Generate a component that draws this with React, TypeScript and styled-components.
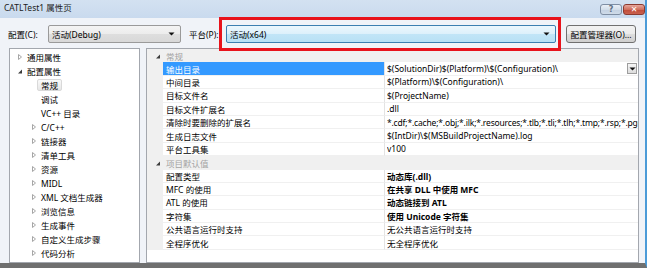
import React from 'react'
import styled, { createGlobalStyle } from 'styled-components'

const FONT = `"Noto Sans", "Noto Sans CJK SC", sans-serif`

const GlobalStyle = createGlobalStyle`
  html, body {
    margin: 0;
    padding: 0;
    background: #ffffff;
  }
  body {
    font-family: ${FONT};
    font-size: 8.5px;
    color: #000;
  }
`

interface TreeNode {
  label: string
  depth: number
  arrow?: 'open' | 'closed'
  selected?: boolean
}

interface PropRow {
  name: string
  value: string
  bold?: boolean
  selected?: boolean
  tight?: boolean
}

interface Section {
  title: string
  rows: PropRow[]
}

const treeNodes: TreeNode[] = [
  { label: '通用属性', depth: 0, arrow: 'closed' },
  { label: '配置属性', depth: 0, arrow: 'open' },
  { label: '常规', depth: 1, selected: true },
  { label: '调试', depth: 1 },
  { label: 'VC++ 目录', depth: 1 },
  { label: 'C/C++', depth: 1, arrow: 'closed' },
  { label: '链接器', depth: 1, arrow: 'closed' },
  { label: '清单工具', depth: 1, arrow: 'closed' },
  { label: '资源', depth: 1, arrow: 'closed' },
  { label: 'MIDL', depth: 1, arrow: 'closed' },
  { label: 'XML 文档生成器', depth: 1, arrow: 'closed' },
  { label: '浏览信息', depth: 1, arrow: 'closed' },
  { label: '生成事件', depth: 1, arrow: 'closed' },
  { label: '自定义生成步骤', depth: 1, arrow: 'closed' },
  { label: '代码分析', depth: 1, arrow: 'closed' }
]

const sections: Section[] = [
  {
    title: '常规',
    rows: [
      {
        name: '输出目录',
        value: '$(SolutionDir)$(Platform)\\$(Configuration)\\',
        selected: true
      },
      { name: '中间目录', value: '$(Platform)\\$(Configuration)\\' },
      { name: '目标文件名', value: '$(ProjectName)' },
      { name: '目标文件扩展名', value: '.dll' },
      {
        name: '清除时要删除的扩展名',
        value:
          '*.cdf;*.cache;*.obj;*.ilk;*.resources;*.tlb;*.tli;*.tlh;*.tmp;*.rsp;*.pgc',
        tight: true
      },
      { name: '生成日志文件', value: '$(IntDir)\\$(MSBuildProjectName).log' },
      { name: '平台工具集', value: 'v100' }
    ]
  },
  {
    title: '项目默认值',
    rows: [
      { name: '配置类型', value: '动态库(.dll)', bold: true },
      { name: 'MFC 的使用', value: '在共享 DLL 中使用 MFC', bold: true },
      { name: 'ATL 的使用', value: '动态链接到 ATL', bold: true },
      { name: '字符集', value: '使用 Unicode 字符集', bold: true },
      { name: '公共语言运行时支持', value: '无公共语言运行时支持' },
      { name: '全程序优化', value: '无全程序优化' }
    ]
  }
]

const Window = styled.div`
  position: relative;
  width: 647px;
  height: 268px;
  box-sizing: border-box;
  display: flex;
  flex-direction: column;
  background: #f0f3f8;
  border-right: 2px solid #4b9bd8;
  border-bottom: 5px solid #6f6f6f;
`

const TitleBar = styled.div`
  height: 18px;
  display: flex;
  align-items: flex-start;
  padding-left: 4px;
  background: linear-gradient(#d3e1f1, #c9daee);
`
const TitleText = styled.span`
  line-height: 16px;
  font-size: 8.5px;
  color: #1b1b1b;
`
const TitleButtons = styled.div`
  margin-left: auto;
  margin-top: 4px;
  display: flex;
  gap: 1px;
`
const CaptionButton = styled.div<{ $close?: boolean }>`
  width: 22px;
  height: 11px;
  box-sizing: border-box;
  border-radius: 3px;
  display: flex;
  align-items: center;
  justify-content: center;
  font-family: "DejaVu Sans", sans-serif;
  font-weight: bold;
  font-size: 8px;
  line-height: 1;
  border: 1px solid ${p => (p.$close ? '#8b3a30' : '#7f8ea3')};
  color: ${p => (p.$close ? '#ffffff' : '#5d6d82')};
  background: ${p =>
    p.$close
      ? 'linear-gradient(#e6a79d, #d0705f 50%, #c04a37 51%, #c9614f)'
      : 'linear-gradient(#e9eff7, #d3deea 50%, #c3d1e2 51%, #cfdbe9)'};
`

const ConfigRow = styled.div`
  display: flex;
  align-items: center;
  height: 18px;
  margin-top: 7px;
  padding-left: 8px;
`
const FieldLabel = styled.span<{ $width: number; $gap?: number }>`
  width: ${p => p.$width}px;
  margin-left: ${p => p.$gap ?? 0}px;
  flex-shrink: 0;
  white-space: nowrap;
`
const Combo = styled.div<{ $width: number; $hot?: boolean }>`
  width: ${p => p.$width}px;
  height: 18px;
  box-sizing: border-box;
  display: flex;
  align-items: center;
  padding: 0 5px 0 3px;
  border-radius: 2px;
  border: 1px solid ${p => (p.$hot ? '#3c7fb1' : '#9a9a9a')};
  background: ${p =>
    p.$hot
      ? 'linear-gradient(#ecf7fd, #dcf0fb 50%, #c1e5f7 51%, #b8e0f5)'
      : 'linear-gradient(#f4f4f4, #ececec 50%, #dedede 51%, #d8d8d8)'};
`
const ComboText = styled.span`
  flex: 1;
  white-space: nowrap;
`
const ManagerButton = styled.div`
  margin-left: 10px;
  width: 70px;
  height: 18px;
  box-sizing: border-box;
  display: flex;
  align-items: center;
  justify-content: center;
  border-radius: 3px;
  border: 1px solid #707070;
  background: linear-gradient(#f2f2f2, #ebebeb 50%, #dddddd 51%, #cfcfcf);
  white-space: nowrap;
`

const Highlight = styled.div`
  position: absolute;
  left: 219px;
  top: 17px;
  width: 342px;
  height: 34px;
  box-sizing: border-box;
  border: 3px solid #e8131c;
  pointer-events: none;
`

const Body = styled.div`
  flex: 1;
  display: flex;
  gap: 6px;
  margin-top: 5px;
  padding: 0 6px 0 9px;
`

const Panel = styled.div`
  box-sizing: border-box;
  border: 1px solid #a3a7ae;
  background: #ffffff;
  overflow: hidden;
`
const TreePanel = styled(Panel)`
  width: 131px;
  padding-top: 1px;
`
const TreeItem = styled.div<{ $depth: number }>`
  height: 14px;
  display: flex;
  align-items: center;
  padding-left: ${p => 5 + p.$depth * 14}px;
`
const ArrowBox = styled.span`
  width: 8px;
  height: 8px;
  flex-shrink: 0;
  display: flex;
`
const TreeLabel = styled.span<{ $selected?: boolean }>`
  padding: 0 3px;
  height: 12px;
  line-height: 11px;
  box-sizing: border-box;
  border-radius: 2px;
  white-space: nowrap;
  border: 1px solid ${p => (p.$selected ? '#d9d9d9' : 'transparent')};
  background: ${p =>
    p.$selected ? 'linear-gradient(#fafafa, #e6e6e6)' : 'transparent'};
`

const GridPanel = styled(Panel)`
  flex: 1;
`
const GridRow = styled.div`
  display: grid;
  grid-template-columns: 16px 222px 1fr;
  height: 13.4px;
`
const Gutter = styled.div`
  background: #f0f0f0;
  display: flex;
  align-items: center;
  padding-left: 6px;
`
const CategoryCell = styled.div`
  grid-column: 2 / 4;
  background: #f0f0f0;
  color: #a3a3a3;
  padding-left: 3px;
  display: flex;
  align-items: center;
`
const NameCell = styled.div<{ $selected?: boolean }>`
  box-sizing: border-box;
  border-right: 1px solid #e3e3e3;
  border-bottom: 1px solid #f0f0f0;
  padding-left: 3px;
  display: flex;
  align-items: center;
  white-space: nowrap;
  overflow: hidden;
  background: ${p => (p.$selected ? '#3399ff' : '#ffffff')};
  color: ${p => (p.$selected ? '#ffffff' : '#000000')};
`
const ValueCell = styled.div<{ $bold?: boolean }>`
  box-sizing: border-box;
  border-bottom: 1px solid #f0f0f0;
  padding-left: 2px;
  display: flex;
  align-items: center;
  overflow: hidden;
  font-weight: ${p => (p.$bold ? 700 : 400)};
`
const ValueText = styled.span<{ $tight?: boolean }>`
  flex: 1;
  white-space: nowrap;
  overflow: hidden;
  letter-spacing: ${p => (p.$tight ? '-0.17px' : '0')};
`
const DropButton = styled.span`
  flex-shrink: 0;
  width: 10px;
  height: 11px;
  margin-right: 1px;
  box-sizing: border-box;
  border: 1px solid #9d9d9d;
  background: linear-gradient(#f6f6f6, #dcdcdc);
  display: flex;
  align-items: center;
  justify-content: center;
`

const DownArrow: React.FC = () => (
  <svg width="7" height="4" viewBox="0 0 7 4">
    <path d="M0.5 0.5h6L3.5 3.5z" fill="#111" />
  </svg>
)

const Glyph: React.FC<{ kind: 'open' | 'closed' }> = ({ kind }) => (
  <svg width="8" height="8" viewBox="0 0 8 8">
    {kind === 'closed' ? (
      <path d="M3.5 1.5L6.5 4L3.5 6.5z" fill="none" stroke="#a6a6a6" />
    ) : (
      <path d="M7 2.5V6.5H3z" fill="#3c3c3c" />
    )}
  </svg>
)

const App: React.FC = () => {
  return (
    <>
      <GlobalStyle />
      <Window>
        <TitleBar>
          <TitleText>CATLTest1 属性页</TitleText>
          <TitleButtons>
            <CaptionButton>?</CaptionButton>
            <CaptionButton $close>✕</CaptionButton>
          </TitleButtons>
        </TitleBar>

        <ConfigRow>
          <FieldLabel $width={40}>配置(C):</FieldLabel>
          <Combo $width={133}>
            <ComboText>活动(Debug)</ComboText>
            <DownArrow />
          </Combo>
          <FieldLabel $width={37} $gap={8}>
            平台(P):
          </FieldLabel>
          <Combo $width={330} $hot>
            <ComboText>活动(x64)</ComboText>
            <DownArrow />
          </Combo>
          <ManagerButton>配置管理器(O)...</ManagerButton>
        </ConfigRow>

        <Body>
          <TreePanel>
            {treeNodes.map(node => (
              <TreeItem key={node.label} $depth={node.depth}>
                <ArrowBox>{node.arrow && <Glyph kind={node.arrow} />}</ArrowBox>
                <TreeLabel $selected={node.selected}>{node.label}</TreeLabel>
              </TreeItem>
            ))}
          </TreePanel>

          <GridPanel>
            {sections.map(section => (
              <React.Fragment key={section.title}>
                <GridRow>
                  <Gutter>
                    <Glyph kind="open" />
                  </Gutter>
                  <CategoryCell>{section.title}</CategoryCell>
                </GridRow>
                {section.rows.map(row => (
                  <GridRow key={row.name}>
                    <Gutter />
                    <NameCell $selected={row.selected}>{row.name}</NameCell>
                    <ValueCell $bold={row.bold}>
                      <ValueText $tight={row.tight}>{row.value}</ValueText>
                      {row.selected && (
                        <DropButton>
                          <DownArrow />
                        </DropButton>
                      )}
                    </ValueCell>
                  </GridRow>
                ))}
              </React.Fragment>
            ))}
          </GridPanel>
        </Body>

        <Highlight />
      </Window>
    </>
  )
}

export default App
